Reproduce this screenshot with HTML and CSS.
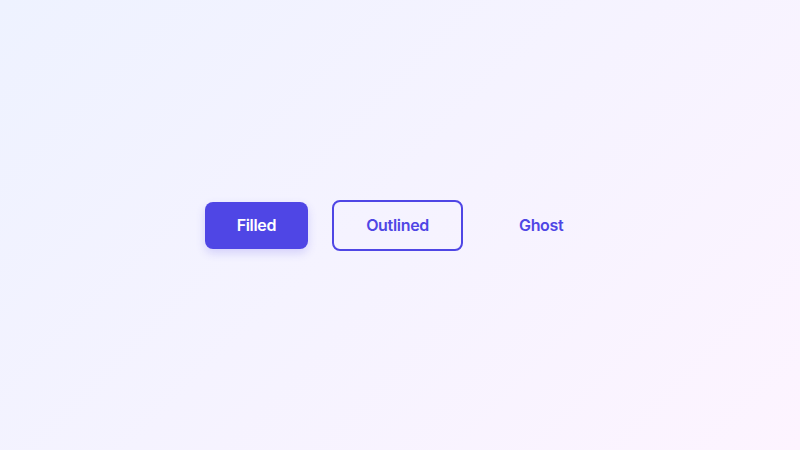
FILE: index.html
```html
<!DOCTYPE html>
<html>
<head>
<meta charset="utf-8">
<link rel="stylesheet" href="styles.css">
</head>
<body>
<main class="stage">
  <div class="row">
    <button class="btn btn-filled">Filled</button>
    <button class="btn btn-outlined">Outlined</button>
    <button class="btn btn-ghost">Ghost</button>
  </div>
</main>
</body>
</html>
```
FILE: styles.css
```css
html, body {
  margin: 0;
  padding: 0;
  width: 800px;
  height: 450px;
}
body {
  background: linear-gradient(135deg, #eef2ff 0%, #fdf4ff 100%);
  font-family: Inter, "Noto Sans", sans-serif;
}
.stage {
  width: 800px;
  height: 450px;
  display: flex;
  align-items: center;
  justify-content: center;
}
.row {
  display: flex;
  align-items: center;
  gap: 24px;
}
.btn {
  font-family: Inter, "Noto Sans", sans-serif;
  font-size: 16px;
  font-weight: 600;
  letter-spacing: -0.02em;
  line-height: 19px;
  padding: 14px 32px;
  border-radius: 8px;
  border: none;
  background: transparent;
  cursor: pointer;
}
.btn-filled {
  background: #4f46e5;
  color: #ffffff;
  box-shadow: 0 4px 10px rgba(79, 70, 229, 0.2);
}
.btn-outlined {
  border: 2px solid #4f46e5;
  color: #4f46e5;
}
.btn-ghost {
  color: #4f46e5;
}
```
